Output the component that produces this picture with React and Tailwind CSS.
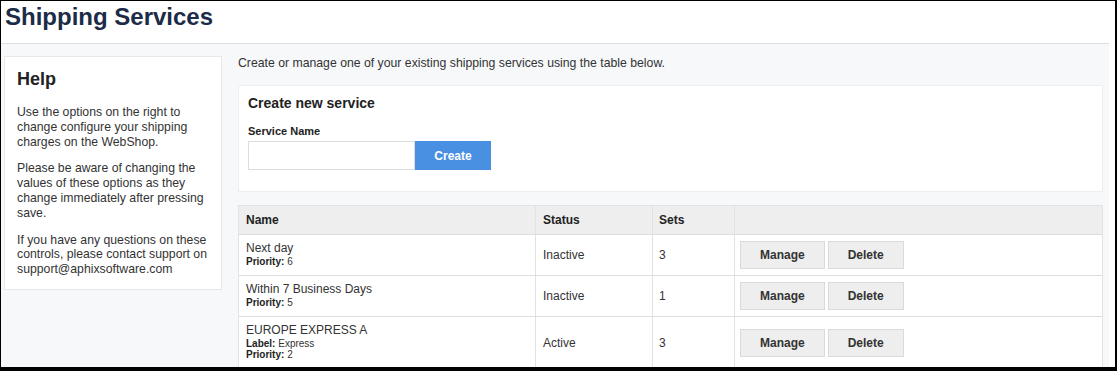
const rows = [
  { name: "Next day", priority: 6, status: "Inactive", sets: 3 },
  { name: "Within 7 Business Days", priority: 5, status: "Inactive", sets: 1 },
  { name: "EUROPE EXPRESS A", label: "Express", priority: 2, status: "Active", sets: 3 },
];

function Btn({ children }) {
  return (
    <button className="h-[28px] border border-[#dadada] bg-[#eeeeee] px-[19px] text-[12px] font-bold leading-[26px] text-[#333]">
      {children}
    </button>
  );
}

export default function App() {
  return (
    <div className="h-[371px] w-[1117px] overflow-hidden border-b-4 border-l border-r-2 border-t border-black bg-white font-['Liberation_Sans',Arial,sans-serif] text-[#333]">
      <div className="flex h-full w-[1108px] flex-col">
        <div className="h-[43px] shrink-0 border-b border-[#dcdfe4] bg-white pl-[4px] pt-[2px]">
          <h1 className="text-[24px] font-bold leading-[28px] text-[#1c2b48]">Shipping Services</h1>
        </div>
        <div className="flex min-h-0 flex-1 gap-[16px] overflow-hidden bg-[#f7f8fa] pl-[3px] pr-[6px] pt-[12px]">
          <aside className="w-[218px] shrink-0 self-start border border-[#e7e8eb] bg-white px-[12px] pb-[12px] pt-[11px]">
            <h2 className="mb-[15px] text-[18px] font-bold leading-[22px] text-[#222]">Help</h2>
            <p className="text-[12.25px] leading-[14.8px]">
              Use the options on the right to change configure your shipping charges on the WebShop.
            </p>
            <p className="mt-[12px] text-[12.25px] leading-[14.8px]">
              Please be aware of changing the values of these options as they change immediately after pressing save.
            </p>
            <p className="mt-[12px] text-[12.25px] leading-[14.8px]">
              If you have any questions on these controls, please contact support on support@aphixsoftware.com
            </p>
          </aside>
          <main className="flex min-w-0 flex-1 flex-col">
            <p className="mb-[14px] text-[12.25px] leading-[15px]">
              Create or manage one of your existing shipping services using the table below.
            </p>
            <section className="border border-[#eceef1] bg-white pb-[21px] pl-[9px] pt-[9px]">
              <h3 className="text-[14px] font-bold leading-[17px] text-[#222]">Create new service</h3>
              <label className="mt-[13px] block text-[11px] font-bold leading-[13px] text-[#222]">Service Name</label>
              <div className="mt-[3px] flex">
                <input className="h-[29px] w-[167px] border border-[#dddddd] bg-white px-2 text-[12px] outline-none" />
                <button className="h-[29px] w-[76px] bg-[#4a90e2] text-[12px] font-bold text-white">Create</button>
              </div>
            </section>
            <div className="mt-[13px] border-x border-t border-[#e3e3e3] bg-white">
              <div className="grid h-[28px] grid-cols-[296px_117px_82px_1fr] bg-[#eeeeee] text-[12px] font-bold leading-[28px] text-[#222]">
                <div className="pl-[7px]">Name</div>
                <div className="border-l border-[#e2e2e2] pl-[7px]">Status</div>
                <div className="border-l border-[#e2e2e2] pl-[6px]">Sets</div>
                <div className="border-l border-[#e2e2e2]"></div>
              </div>
              {rows.map((r) => (
                <div key={r.name} className="grid grid-cols-[296px_117px_82px_1fr] border-t border-[#dddddd] text-[12px]">
                  <div className="pb-[8px] pl-[7px] pt-[5px]">
                    <div className="leading-[16px]">{r.name}</div>
                    {r.label && (
                      <div className="text-[10px] leading-[11px]">
                        <b className="text-[#222]">Label:</b> {r.label}
                      </div>
                    )}
                    <div className="text-[10px] leading-[11px]">
                      <b className="text-[#222]">Priority:</b> {r.priority}
                    </div>
                  </div>
                  <div className="flex items-center border-l border-[#e2e2e2] pl-[7px]">{r.status}</div>
                  <div className="flex items-center border-l border-[#e2e2e2] pl-[6px]">{r.sets}</div>
                  <div className="flex items-center gap-[3px] border-l border-[#e2e2e2] pl-[5px]">
                    <Btn>Manage</Btn>
                    <Btn>Delete</Btn>
                  </div>
                </div>
              ))}
            </div>
          </main>
        </div>
      </div>
    </div>
  );
}
